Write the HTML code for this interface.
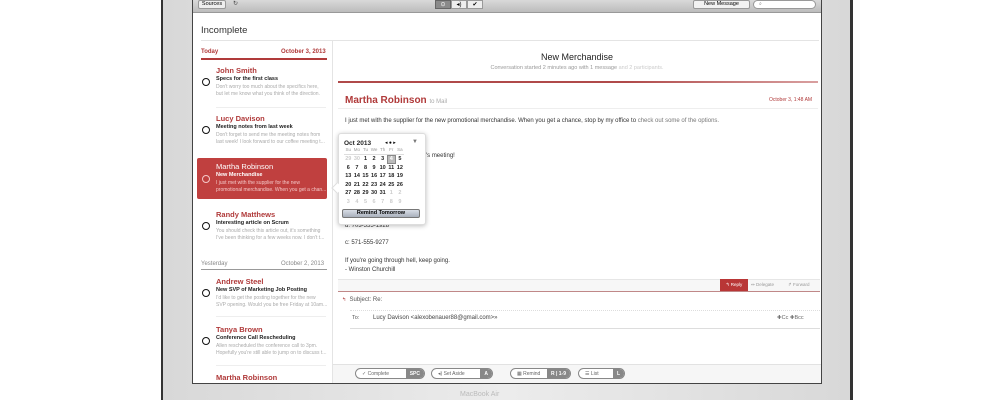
<!DOCTYPE html><html><head><style>
*{margin:0;padding:0;box-sizing:border-box}
body{width:994px;height:400px;background:#fff;position:relative;overflow:hidden;font-family:"Liberation Sans",sans-serif}
.a{position:absolute;white-space:nowrap}
.red{color:#b03a3a}
.nm{font-size:7.5px;font-weight:bold;color:#b03a3a}
.sb{font-size:5.5px;font-weight:bold;color:#222}
.pv{font-size:5px;color:#aaa}
.c{width:8px;height:8px;border:1.6px solid #111;border-radius:50%}
.bt{border:1px solid #888;border-radius:6px;height:11px;font-size:5px;color:#666;display:flex;align-items:center;overflow:hidden;background:#fff}
.bt b{background:#888;color:#fff;height:100%;display:flex;align-items:center;padding:0 4px;margin-left:auto;font-weight:bold}
.cal{display:grid;grid-template-columns:repeat(7,8.6px);grid-auto-rows:8.6px;font-size:5.5px;font-weight:bold;color:#222;text-align:center;line-height:8.6px}
.cal .g{color:#ccc}
.cal .s{background:#bbb;color:#fff;border:1px solid #888;line-height:6.6px}
</style></head><body>
<div class="a" style="left:161px;top:0;width:692px;height:400px;background:linear-gradient(90deg,#d8d8d8,#ececec 50%,#d8d8d8);border-left:2px solid #333;border-right:3px solid #333"></div>
<div class="a" style="left:192px;top:0;width:630px;height:384px;background:#fff;border:1.5px solid #444;border-top:none"></div>
<div class="a" style="left:460px;top:391px;font-size:7px;color:#bbb">MacBook Air</div>
<div class="a" style="left:193px;top:0;width:628px;height:13px;background:linear-gradient(#d9d9d9,#bcbcbc);border-bottom:1px solid #999"></div>
<div class="a" style="left:198px;top:0;width:28px;height:9px;background:#eee;border:1px solid #999;border-radius:2px;font-size:5.5px;text-align:center;line-height:7px">Sources</div>
<div class="a" style="left:233px;top:0;font-size:6px;color:#444">↻</div>
<div class="a" style="left:435px;top:0;width:16px;height:9px;background:#8a8a8a;border:1px solid #666;font-size:6px;color:#fff;text-align:center;line-height:8px">⊙</div>
<div class="a" style="left:451px;top:0;width:16px;height:9px;background:#eee;border:1px solid #999;font-size:6px;text-align:center;line-height:8px">◂)</div>
<div class="a" style="left:467px;top:0;width:16px;height:9px;background:#eee;border:1px solid #999;font-size:6px;text-align:center;line-height:8px">✔</div>
<div class="a" style="left:693px;top:0;width:57px;height:9px;background:#f2f2f2;border:1px solid #999;border-radius:2px;font-size:5.5px;text-align:center;line-height:7px">New Message</div>
<div class="a" style="left:753px;top:0;width:63px;height:9px;background:#fff;border:1px solid #999;border-radius:5px;font-size:5px;line-height:7px;padding-left:5px;color:#777">⌕</div>
<div class="a" style="left:201px;top:25px;font-size:9.5px;color:#333">Incomplete</div>
<div class="a" style="left:201px;top:40px;width:618px;height:1px;background:#e4e4e4"></div>
<div class="a" style="left:332px;top:41px;width:1px;height:342px;background:#e4e4e4"></div>
<div class="a red" style="left:201px;top:49px;font-size:6px;font-weight:bold">Today</div>
<div class="a red" style="left:281px;top:49px;font-size:6px;font-weight:bold">October 3, 2013</div>
<div class="a" style="left:201px;top:58px;width:126px;height:1.5px;background:#b03a3a"></div>
<div class="a nm" style="left:216px;top:66px">John Smith</div>
<div class="a sb" style="left:216px;top:76px">Specs for the first class</div>
<div class="a pv" style="left:216px;top:84px;line-height:7px">Don't worry too much about the specifics here,<br>but let me know what you think of the direction.</div>
<div class="a c" style="left:202px;top:78px"></div>
<div class="a" style="left:216px;top:107px;width:110px;height:1px;background:#eee"></div>
<div class="a nm" style="left:216px;top:114px">Lucy Davison</div>
<div class="a sb" style="left:216px;top:124px">Meeting notes from last week</div>
<div class="a pv" style="left:216px;top:132px;line-height:7px">Don't forget to send me the meeting notes from<br>last week! I look forward to our coffee meeting t...</div>
<div class="a c" style="left:202px;top:126px"></div>
<div class="a" style="left:197px;top:158px;width:130px;height:41px;background:#c0403f;border-radius:2px"></div>
<div class="a" style="left:216px;top:162px;font-size:7.5px;color:#fff">Martha Robinson</div>
<div class="a" style="left:216px;top:172px;font-size:5.5px;font-weight:bold;color:#fff">New Merchandise</div>
<div class="a" style="left:216px;top:180px;font-size:5px;color:#f4c8c8;line-height:7px">I just met with the supplier for the new<br>promotional merchandise. When you get a chan...</div>
<div class="a c" style="left:202px;top:175px;border-color:#f4c8c8"></div>
<div class="a nm" style="left:216px;top:210px">Randy Matthews</div>
<div class="a sb" style="left:216px;top:220px">Interesting article on Scrum</div>
<div class="a pv" style="left:216px;top:228px;line-height:7px">You should check this article out, it's something<br>I've been thinking for a few weeks now. I don't t...</div>
<div class="a c" style="left:202px;top:222px"></div>
<div class="a" style="left:201px;top:261px;font-size:6px;color:#888">Yesterday</div>
<div class="a" style="left:281px;top:261px;font-size:6px;color:#888">October 2, 2013</div>
<div class="a" style="left:201px;top:269px;width:126px;height:1px;background:#999"></div>
<div class="a nm" style="left:216px;top:277px">Andrew Steel</div>
<div class="a sb" style="left:216px;top:287px">New SVP of Marketing Job Posting</div>
<div class="a pv" style="left:216px;top:295px;line-height:7px">I'd like to get the posting together for the new<br>SVP opening. Would you be free Friday at 10am...</div>
<div class="a c" style="left:202px;top:289px"></div>
<div class="a" style="left:216px;top:316px;width:110px;height:1px;background:#eee"></div>
<div class="a nm" style="left:216px;top:325px">Tanya Brown</div>
<div class="a sb" style="left:216px;top:335px">Conference Call Rescheduling</div>
<div class="a pv" style="left:216px;top:343px;line-height:7px">Allen rescheduled the conference call to 3pm.<br>Hopefully you're still able to jump on to discuss t...</div>
<div class="a c" style="left:202px;top:337px"></div>
<div class="a" style="left:216px;top:365px;width:110px;height:1px;background:#eee"></div>
<div class="a nm" style="left:216px;top:373px">Martha Robinson</div>
<div class="a" style="left:333px;top:52px;width:488px;text-align:center;font-size:9px;color:#222">New Merchandise</div>
<div class="a" style="left:333px;top:65px;width:488px;text-align:center;font-size:5.5px;color:#999">Conversation started 2 minutes ago with 1 message <span style="color:#ccc">and 2 participants.</span></div>
<div class="a" style="left:338px;top:81px;width:480px;height:1.5px;background:linear-gradient(90deg,#b04a4a 60%,#d9a0a0)"></div>
<div class="a" style="left:345px;top:95px;font-size:10px;font-weight:bold;color:#b03a3a">Martha Robinson <span style="font-size:6px;font-weight:normal;color:#aaa">to Mail</span></div>
<div class="a" style="left:769px;top:97px;font-size:5px;color:#b03a3a">October 3, 1:48 AM</div>
<div class="a" style="left:338px;top:108px;width:480px;height:1px;background:#eee"></div>
<div class="a" style="left:345px;top:118px;font-size:6px;color:#333">I just met with the supplier for the new promotional merchandise. When you get a chance, stop by my office to <span style="color:#777">check out some of the options.</span></div>
<div class="a" style="left:426px;top:153px;font-size:6px;color:#333">'s meeting!</div>
<div class="a" style="left:345px;top:223px;font-size:6px;color:#333">d: 703-555-1928</div>
<div class="a" style="left:345px;top:240px;font-size:6px;color:#333">c: 571-555-9277</div>
<div class="a" style="left:345px;top:257px;font-size:6px;color:#333;line-height:9px">If you're going through hell, keep going.<br>- Winston Churchill</div>
<div class="a" style="left:338px;top:279px;width:482px;height:13px;background:#f7f7f7;border-top:1px solid #e6e6e6;border-bottom:1.5px solid #c08888"></div>
<div class="a" style="left:720px;top:279px;width:28px;height:12px;background:#b93636;color:#fff;font-size:4.5px;line-height:12px;text-align:center">↰ Reply</div>
<div class="a" style="left:751px;top:282px;font-size:4.5px;color:#999">↭ Delegate</div>
<div class="a" style="left:788px;top:282px;font-size:4.5px;color:#999">↱ Forward</div>
<div class="a" style="left:342px;top:297px;font-size:6px;color:#555"><span class="red" style="font-size:5px">↰</span>&nbsp; Subject: Re:</div>
<div class="a" style="left:350px;top:310px;width:470px;border-top:1px dotted #ddd"></div>
<div class="a" style="left:352px;top:315px;font-size:5.5px;color:#555">To:</div>
<div class="a" style="left:373px;top:315px;font-size:6px;color:#444">Lucy Davison &lt;alexobenauer88@gmail.com&gt;»</div>
<div class="a" style="left:777px;top:315px;font-size:5.5px;color:#666">✚Cc ✚Bcc</div>
<div class="a" style="left:350px;top:328px;width:470px;height:1px;background:#ddd"></div>
<div class="a" style="left:333px;top:364px;width:488px;height:19px;background:#f6f6f6;border-top:1px solid #e2e2e2"></div>
<div class="a bt" style="left:355px;top:368px;width:70px;padding-left:6px">✓ Complete<b>SPC</b></div>
<div class="a bt" style="left:431px;top:368px;width:62px;padding-left:6px">◂) Set Aside<b>A</b></div>
<div class="a bt" style="left:510px;top:368px;width:61px;padding-left:6px">▦ Remind<b>R | 1-9</b></div>
<div class="a bt" style="left:578px;top:368px;width:47px;padding-left:6px">☰ List<b>L</b></div>
<div class="a" style="left:338px;top:133px;width:88px;height:92px;background:#fff;border:1px solid #ddd;border-radius:3px;box-shadow:0 1px 5px rgba(0,0,0,.25)"></div>
<div class="a" style="left:333px;top:184px;width:8px;height:8px;background:#fff;border-left:1px solid #ddd;border-bottom:1px solid #ddd;transform:rotate(45deg)"></div>
<div class="a" style="left:344px;top:140px;font-size:6.5px;font-weight:bold;color:#222">Oct 2013</div>
<div class="a" style="left:385px;top:140px;font-size:5px">◂ ● ▸</div>
<div class="a" style="left:412px;top:139px;font-size:6px;color:#777">▼</div>
<div class="a cal" style="left:344px;top:146px;font-weight:normal;color:#999;font-size:4.5px"><span>Su</span><span>Mo</span><span>Tu</span><span>We</span><span>Th</span><span>Fr</span><span>Sa</span></div>
<div class="a" style="left:344px;top:154px;width:60px;height:1px;background:#ddd"></div>
<div class="a cal" style="left:344px;top:155px">
<span class="g">29</span><span class="g">30</span><span>1</span><span>2</span><span>3</span><span class="s">4</span><span>5</span>
<span>6</span><span>7</span><span>8</span><span>9</span><span>10</span><span>11</span><span>12</span>
<span>13</span><span>14</span><span>15</span><span>16</span><span>17</span><span>18</span><span>19</span>
<span>20</span><span>21</span><span>22</span><span>23</span><span>24</span><span>25</span><span>26</span>
<span>27</span><span>28</span><span>29</span><span>30</span><span>31</span><span class="g">1</span><span class="g">2</span>
<span class="g">3</span><span class="g">4</span><span class="g">5</span><span class="g">6</span><span class="g">7</span><span class="g">8</span><span class="g">9</span>
</div>
<div class="a" style="left:342px;top:209px;width:78px;height:9px;background:linear-gradient(#d8dde6,#a9b0bc);border:1px solid #777;border-radius:2px;font-size:5.5px;font-weight:bold;text-align:center;line-height:7px">Remind Tomorrow</div>
</body></html>
